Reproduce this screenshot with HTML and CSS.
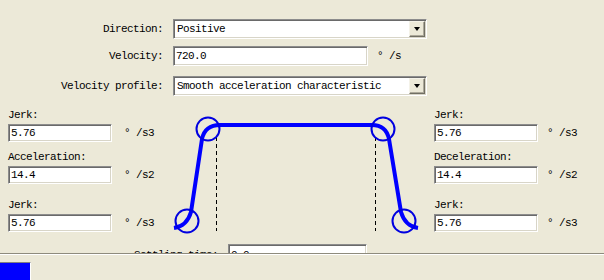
FILE: index.html
```html
<!DOCTYPE html>
<html lang="en">
<head>
  <meta charset="UTF-8" />
  <title>Motion profile</title>
  <link rel="stylesheet" href="styles.css">
</head>
<body>
  <div class="panel">

    <!-- Motion settings -->
    <div class="motion-form">
      <div class="form-row">
        <span class="row-label">Direction:</span>
        <div class="combo">
          <span class="combo-text">Positive</span>
          <span class="combo-btn"><span class="arrow"></span></span>
        </div>
      </div>
      <div class="form-row row-velocity">
        <span class="row-label">Velocity:</span>
        <div class="edit velocity">720.0</div>
        <span class="unit unit-top">° /s</span>
      </div>
      <div class="form-row row-profile">
        <span class="row-label">Velocity profile:</span>
        <div class="combo">
          <span class="combo-text">Smooth acceleration characteristic</span>
          <span class="combo-btn"><span class="arrow"></span></span>
        </div>
      </div>
    </div>

    <!-- Profile diagram with parameters -->
    <div class="profile">
      <div class="param-col">
        <div class="param">
          <div class="param-label">Jerk:</div>
          <div class="param-field"><div class="edit short">5.76</div><span class="unit">° /s3</span></div>
        </div>
        <div class="param mid">
          <div class="param-label">Acceleration:</div>
          <div class="param-field"><div class="edit short">14.4</div><span class="unit">° /s2</span></div>
        </div>
        <div class="param low">
          <div class="param-label">Jerk:</div>
          <div class="param-field"><div class="edit short">5.76</div><span class="unit">° /s3</span></div>
        </div>
      </div>

      <svg class="graph" width="258" height="140" viewBox="168 96 258 140">
        <line x1="216.5" y1="137" x2="216.5" y2="231" stroke="#000" stroke-width="1" stroke-dasharray="4 3"/>
        <line x1="375.5" y1="137" x2="375.5" y2="231" stroke="#000" stroke-width="1" stroke-dasharray="4 3"/>
        <path d="M174,228 Q187,226 191,212 L202,139 Q205,125 220,125 L372,125 Q386,125 389,139 L401,212 Q405,226 418,228"
              fill="none" stroke="#0000ff" stroke-width="4"/>
        <circle cx="208" cy="129" r="11.5" fill="none" stroke="#0000e0" stroke-width="2"/>
        <circle cx="383" cy="129" r="11.5" fill="none" stroke="#0000e0" stroke-width="2"/>
        <circle cx="187" cy="221" r="11.5" fill="none" stroke="#0000e0" stroke-width="2"/>
        <circle cx="404" cy="221" r="11.5" fill="none" stroke="#0000e0" stroke-width="2"/>
      </svg>

      <div class="param-col right">
        <div class="param">
          <div class="param-label">Jerk:</div>
          <div class="param-field"><div class="edit short">5.76</div><span class="unit">° /s3</span></div>
        </div>
        <div class="param mid">
          <div class="param-label">Deceleration:</div>
          <div class="param-field"><div class="edit short">14.4</div><span class="unit">° /s2</span></div>
        </div>
        <div class="param low">
          <div class="param-label">Jerk:</div>
          <div class="param-field"><div class="edit short">5.76</div><span class="unit">° /s3</span></div>
        </div>
      </div>
    </div>

    <!-- Next row, cut off by the panel -->
    <div class="form-row row-extra">
      <span class="row-label wide">Settling time:</span>
      <div class="edit extra">0.0</div>
    </div>
  </div>

  <div class="status">
    <div class="progress"></div>
  </div>
</body>
</html>
```

FILE: styles.css
```css
body {
  margin: 0;
  background-color: #ece9d8;
  font-family: 'Liberation Mono', 'DejaVu Sans Mono', monospace;
  font-size: 11px;
  letter-spacing: -0.6px;
  color: #000;
}

.panel {
  height: 253px;
  overflow: hidden;
}

.motion-form {
  padding-top: 19px;
}

.form-row {
  display: flex;
  align-items: center;
  gap: 10px;
}

.row-velocity {
  margin-top: 7px;
}

.row-profile {
  margin-top: 10px;
}

.row-label {
  width: 163px;
  text-align: right;
  white-space: nowrap;
}

.row-label.wide {
  width: 218px;
}

/* Combo box */
.combo {
  width: 254px;
  height: 20px;
  box-sizing: border-box;
  display: flex;
  align-items: center;
  padding: 1px 1px 1px 3px;
  background-color: #fff;
  border: 1px solid;
  border-color: #8c8c8c #fff #fff #8c8c8c;
  box-shadow: inset 1px 1px 0 #6a6a6a, inset -1px -1px 0 #d8d5c8;
}

.combo-text {
  flex: 1;
  white-space: nowrap;
}

.combo-btn {
  width: 16px;
  height: 16px;
  box-sizing: border-box;
  display: flex;
  align-items: center;
  justify-content: center;
  background-color: #ece9d8;
  border: 1px solid;
  border-color: #f4f2e8 #716f64 #716f64 #f4f2e8;
  box-shadow: inset -1px -1px 0 #aca899;
}

.arrow {
  width: 0;
  height: 0;
  border-top: 4px solid #000;
  border-left: 3.5px solid transparent;
  border-right: 3.5px solid transparent;
}

/* Edit box */
.edit {
  height: 20px;
  box-sizing: border-box;
  display: flex;
  align-items: center;
  padding-left: 2px;
  background-color: #fff;
  border: 1px solid;
  border-color: #8c8c8c #fff #fff #8c8c8c;
  box-shadow: inset 1px 1px 0 #6a6a6a, inset -1px -1px 0 #d8d5c8;
  white-space: nowrap;
}

.edit.velocity {
  width: 195px;
}

.edit.short {
  width: 104px;
  height: 18px;
}

.edit.extra {
  width: 139px;
  align-items: flex-start;
  padding-top: 4px;
}

.unit {
  white-space: pre;
}

.unit-top {
  margin-left: -1px;
}

/* Profile area */
.profile {
  display: flex;
  height: 140px;
}

.param-col {
  width: 160px;
  padding-left: 8px;
  padding-top: 12px;
}

.param-label {
  line-height: 14px;
}

.param-field {
  display: flex;
  align-items: center;
  margin-top: 2px;
}

.param-field .unit {
  margin-left: 12px;
}

.param-col.right .unit {
  margin-left: 9px;
}

.param.mid {
  margin-top: 8px;
}

.param.low {
  margin-top: 14px;
}

.graph {
  display: block;
}

.row-extra {
  margin-top: 8px;
  align-items: flex-start;
}

.row-extra .row-label {
  padding-top: 5px;
}

/* Status bar */
.status {
  height: 27px;
  box-sizing: border-box;
  padding-top: 8px;
  border-top: 1px solid #8e8b7d;
  box-shadow: inset 0 1px 0 #fff;
}

.progress {
  width: 31px;
  height: 18px;
  box-sizing: border-box;
  border-top: 1px solid #808080;
  border-right: 1px solid #fff;
  background-color: #0000ff;
}
```
